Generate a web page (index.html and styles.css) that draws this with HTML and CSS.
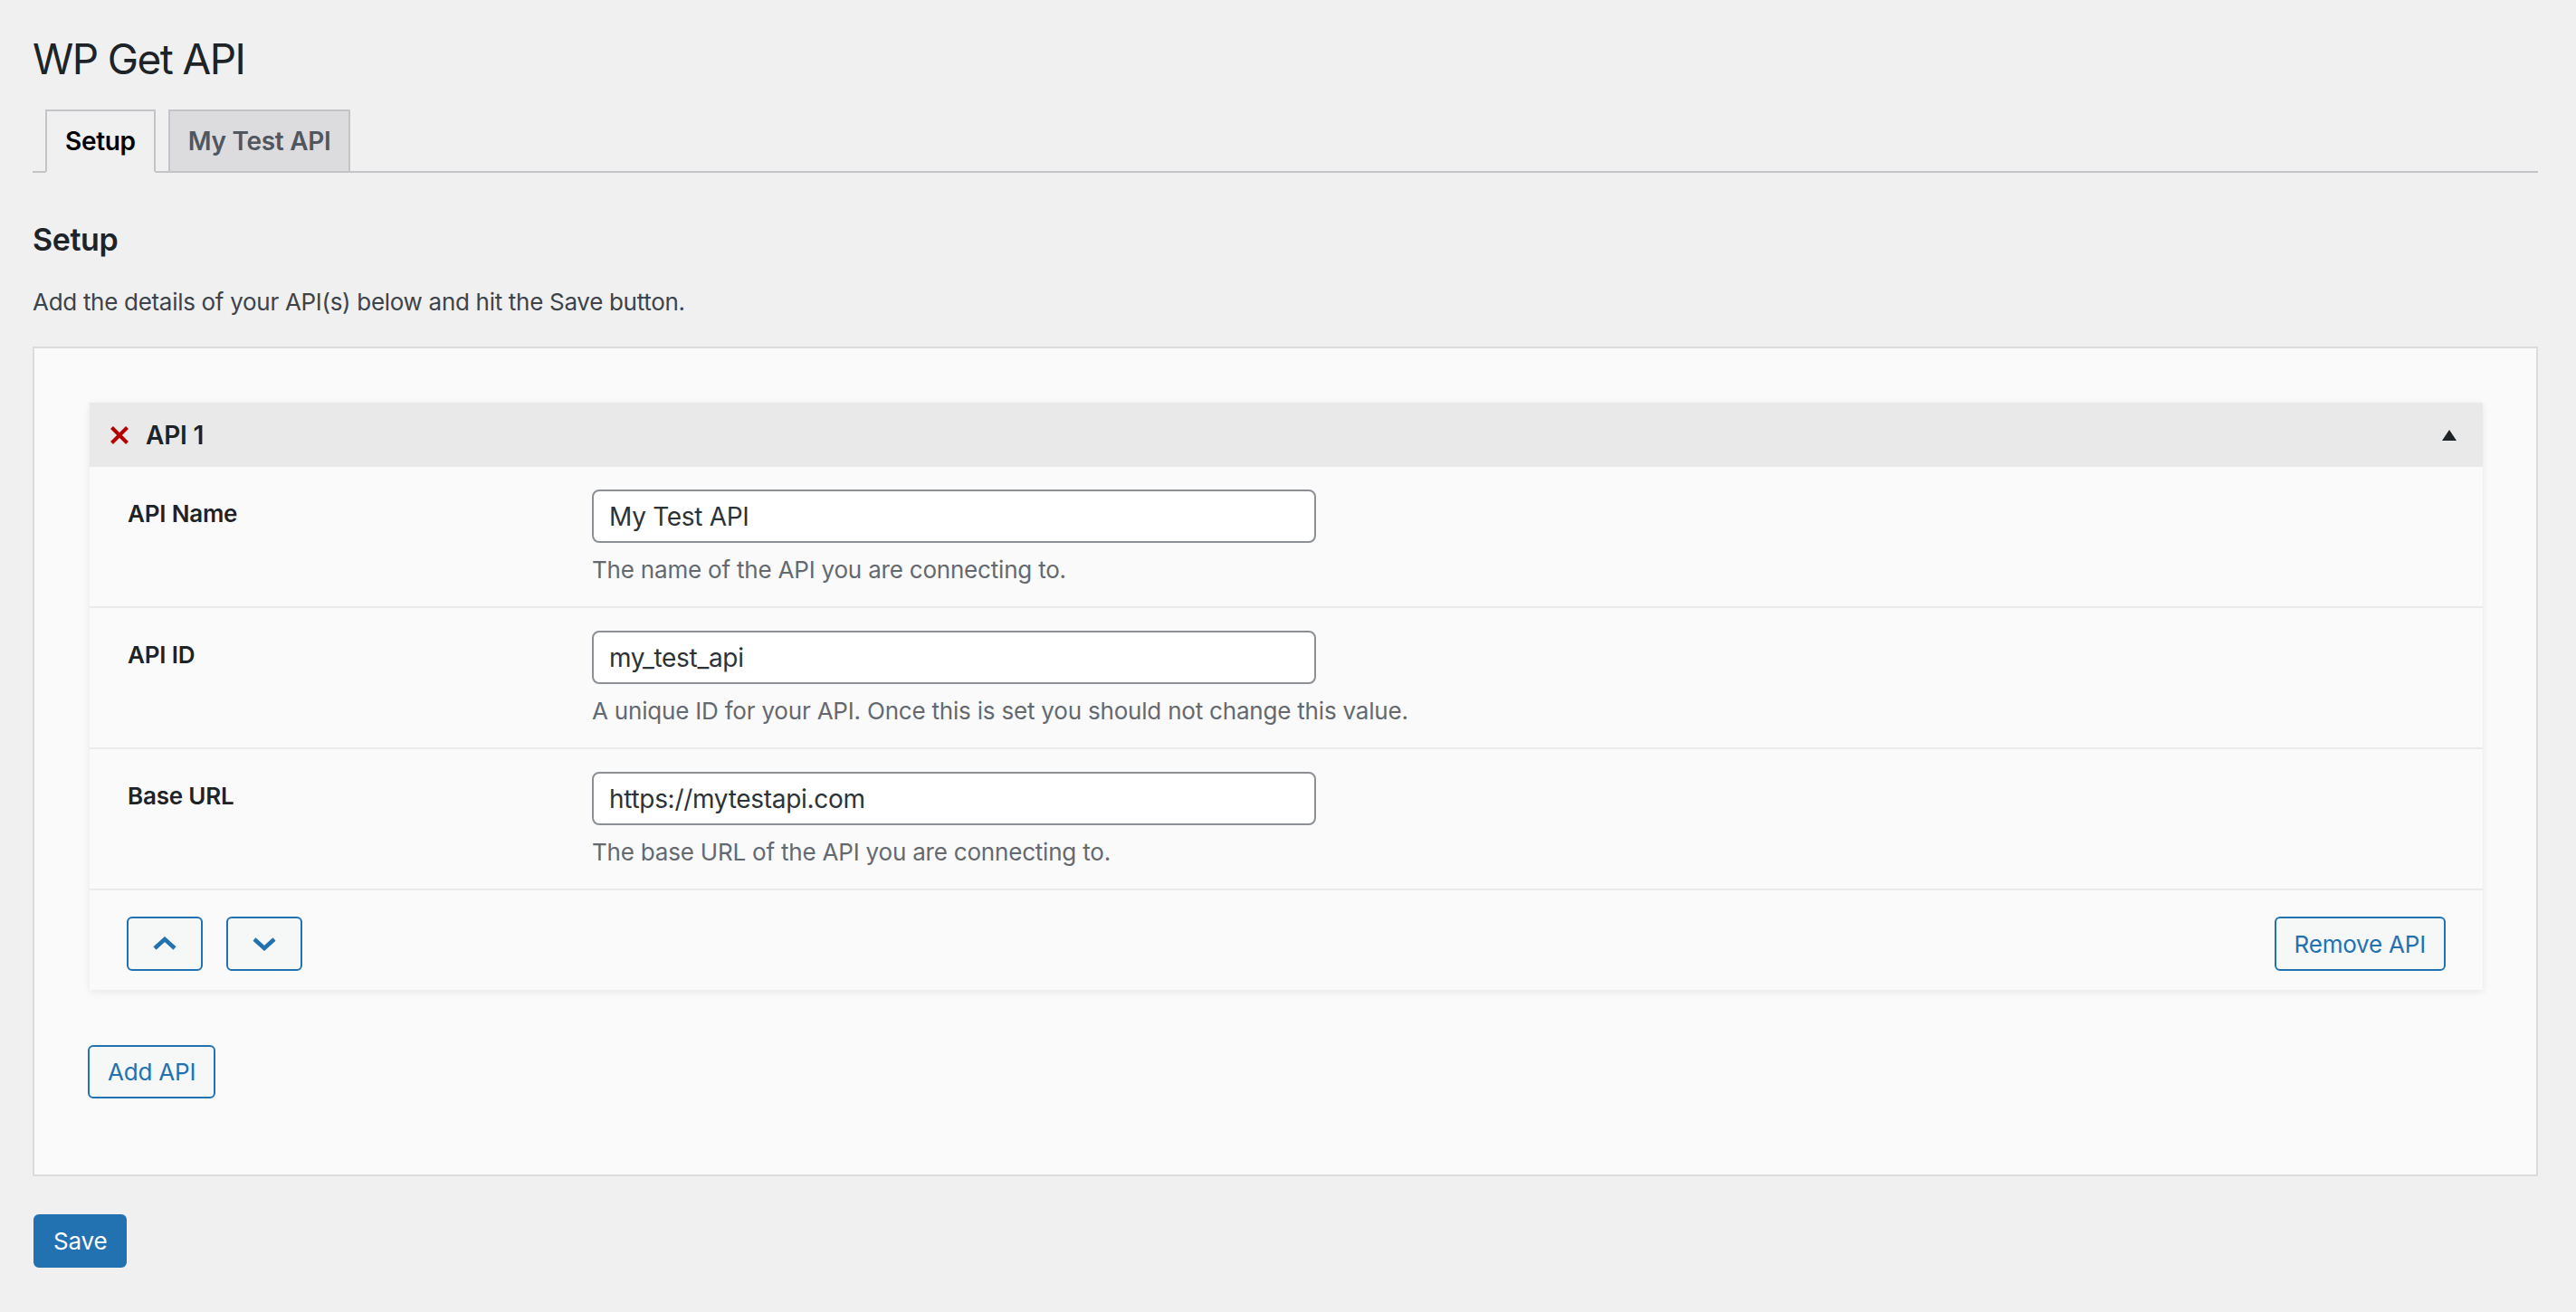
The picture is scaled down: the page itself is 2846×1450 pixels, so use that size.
FILE: index.html
```html
<!DOCTYPE html>
<html lang="en">
<head>
<meta charset="utf-8">
<title>WP Get API</title>
<link rel="stylesheet" href="styles.css">
</head>
<body>
<div class="wrap">
  <h1 class="page-title">WP Get API</h1>
  <nav class="tabs">
    <a class="tab tab-active">Setup</a>
    <a class="tab">My Test API</a>
  </nav>
  <h2 class="section-title">Setup</h2>
  <p class="intro">Add the details of your API(s) below and hit the Save button.</p>

  <div class="box">
    <div class="card">
      <div class="card-head">
        <svg class="icon-remove" width="20" height="20" viewBox="0 0 20 20"><path d="M1.5 1.5 L18.5 18.5 M18.5 1.5 L1.5 18.5" stroke="#b30000" stroke-width="4" fill="none"/></svg>
        <span class="card-title">API 1</span>
        <svg class="icon-toggle" width="16" height="12" viewBox="0 0 16 12"><path d="M8 0 L16 12 L0 12 Z" fill="#1d2327"/></svg>
      </div>

      <div class="field">
        <div class="field-label">API Name</div>
        <div class="field-control">
          <input class="text-input" type="text" value="My Test API">
          <p class="field-desc">The name of the API you are connecting to.</p>
        </div>
      </div>

      <div class="field">
        <div class="field-label">API ID</div>
        <div class="field-control">
          <input class="text-input" type="text" value="my_test_api">
          <p class="field-desc">A unique ID for your API. Once this is set you should not change this value.</p>
        </div>
      </div>

      <div class="field">
        <div class="field-label">Base URL</div>
        <div class="field-control">
          <input class="text-input" type="text" value="https://mytestapi.com">
          <p class="field-desc">The base URL of the API you are connecting to.</p>
        </div>
      </div>

      <div class="card-foot">
        <div class="move-group">
          <button class="btn btn-icon" type="button"><svg width="28" height="16" viewBox="0 0 28 16"><path d="M3 13 L14 3 L25 13" stroke="#2271b1" stroke-width="4.5" fill="none"/></svg></button>
          <button class="btn btn-icon" type="button"><svg width="28" height="16" viewBox="0 0 28 16"><path d="M3 3 L14 13 L25 3" stroke="#2271b1" stroke-width="4.5" fill="none"/></svg></button>
        </div>
        <button class="btn" type="button">Remove API</button>
      </div>
    </div>

    <button class="btn btn-add" type="button">Add API</button>
  </div>

  <button class="btn-primary" type="button">Save</button>
</div>
</body>
</html>
```

FILE: styles.css
```css
html, body {
  margin: 0;
  padding: 0;
  background: #f0f0f1;
}

body {
  font-family: Inter, "Noto Sans", "Liberation Sans", sans-serif;
  font-size: 26px;
  letter-spacing: -0.2px;
  color: #1d2327;
}

.wrap {
  padding: 0 42px 60px 36px;
}

.page-title {
  margin: 35px 0 0;
  font-size: 46px;
  line-height: 60px;
  font-weight: 400;
  letter-spacing: -1.6px;
  color: #1d2327;
}

.tabs {
  display: flex;
  margin-top: 26px;
  border-bottom: 2px solid #c3c4c7;
}

.tab {
  margin: 0 0 -2px 14px;
  padding: 9px 20px;
  font-size: 28px;
  line-height: 48px;
  font-weight: 600;
  letter-spacing: -0.3px;
  color: #50575e;
  background: #dcdcde;
  border: 2px solid #c3c4c7;
}

.tab-active {
  color: #000;
  background: #f0f0f1;
  border-bottom-color: #f0f0f1;
}

.section-title {
  margin: 52px 0 0;
  font-size: 34px;
  line-height: 44px;
  font-weight: 600;
  letter-spacing: -0.4px;
  color: #1d2327;
}

.intro {
  margin: 29px 0 0;
  font-size: 26px;
  line-height: 36px;
  letter-spacing: -0.3px;
  color: #3c434a;
}

.box {
  margin-top: 31px;
  padding: 60px 59px 84px 60px;
  background: #fafafa;
  border: 2px solid #dcdcde;
}

.card {
  margin: 0 0 0 1px;
  background: #fafafa;
  box-shadow: 0 2px 8px rgba(0, 0, 0, 0.08);
}

.card-head {
  display: flex;
  align-items: center;
  height: 71px;
  padding: 0 29px 0 23px;
  background: #e9e9e9;
}

.icon-remove {
  display: block;
}

.card-title {
  margin-left: 19px;
  font-size: 28px;
  font-weight: 600;
  color: #1d2327;
}

.icon-toggle {
  display: block;
  margin-left: auto;
}

.field {
  display: flex;
  padding: 25px 42px 22px;
  border-top: 2px solid #ebebeb;
}

.card-head + .field {
  border-top: 0;
}

.field-label {
  width: 513px;
  flex: none;
  padding-top: 9px;
  font-size: 26px;
  line-height: 36px;
  font-weight: 600;
  color: #1d2327;
}

.field-control {
  flex: 1;
}

.text-input {
  display: block;
  box-sizing: border-box;
  width: 800px;
  height: 59px;
  margin: 0;
  padding: 0 17px;
  font-family: inherit;
  font-size: 28px;
  letter-spacing: -0.3px;
  color: #2c3338;
  background: #fff;
  border: 2px solid #8c8f94;
  border-radius: 8px;
}

.field-desc {
  margin: 12px 0 0;
  font-size: 26px;
  line-height: 36px;
  color: #646970;
}

.card-foot {
  display: flex;
  align-items: center;
  justify-content: space-between;
  padding: 29px 41px 21px;
  border-top: 2px solid #ebebeb;
}

.move-group {
  display: flex;
  gap: 26px;
}

.btn {
  box-sizing: border-box;
  height: 60px;
  margin: 0;
  padding: 0 20px;
  font-family: inherit;
  font-size: 26px;
  letter-spacing: -0.2px;
  color: #2271b1;
  background: #f6f7f7;
  border: 2px solid #2271b1;
  border-radius: 6px;
}

.btn-icon {
  display: flex;
  align-items: center;
  justify-content: center;
  width: 84px;
  padding: 0;
}

.btn-add {
  display: block;
  height: 59px;
  margin: 61px 0 0 -1px;
}

.btn-primary {
  display: block;
  box-sizing: border-box;
  height: 59px;
  margin: 42px 0 0 1px;
  padding: 0 20px;
  font-family: inherit;
  font-size: 26px;
  letter-spacing: -0.2px;
  color: #fff;
  background: #2271b1;
  border: 2px solid #2271b1;
  border-radius: 6px;
}
```
